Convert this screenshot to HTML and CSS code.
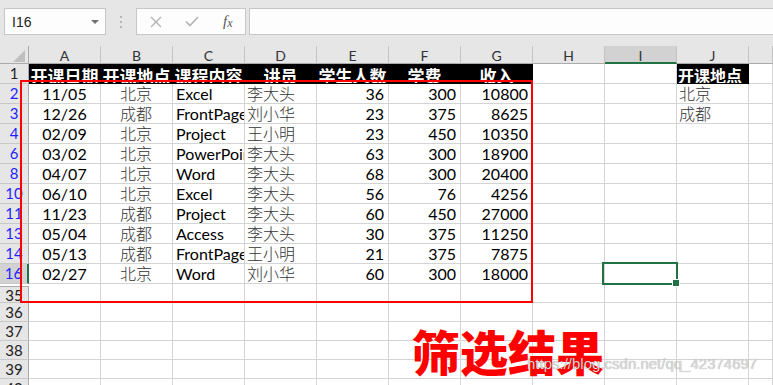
FILE: index.html
```html
<!DOCTYPE html>
<html lang="zh-CN">
<head>
<meta charset="UTF-8">
<meta name="viewport" content="width=device-width, initial-scale=1.0">
<title>筛选结果</title>
<link rel="stylesheet" href="styles.css">
</head>
<body>

<div class="toolbar">
    <div class="namebox"><span>I16</span><span class="caret"></span></div>
    <div class="grip">
        <svg width="4" height="14" viewBox="0 0 4 14"><circle cx="2" cy="2" r="1" fill="#a6a6a6"/><circle cx="2" cy="7" r="1" fill="#a6a6a6"/><circle cx="2" cy="12" r="1" fill="#a6a6a6"/></svg>
    </div>
    <div class="fxbox">
        <svg class="icon-x" width="12" height="12" viewBox="0 0 12 12"><path d="M1 1 L11 11 M11 1 L1 11" stroke="#b4b4b4" stroke-width="1.4" fill="none"/></svg>
        <svg class="icon-ok" width="14" height="11" viewBox="0 0 14 11"><path d="M1 5.5 L5 9.5 L13 1" stroke="#b4b4b4" stroke-width="1.6" fill="none"/></svg>
        <span class="fx">f<span>x</span></span>
    </div>
    <div class="formula"></div>
</div>

<div class="sheet">
    <div class="row colhead">
        <div class="corner"><span class="tri"></span></div>
        <div>A</div><div>B</div><div>C</div><div>D</div><div>E</div><div>F</div><div>G</div><div>H</div><div class="on">I</div><div>J</div><div></div>
    </div>

    <div class="row">
        <div class="rh">1</div>
        <div class="hd">开课日期</div><div class="hd">开课地点</div><div class="hd">课程内容</div><div class="hd">讲员</div><div class="hd">学生人数</div><div class="hd">学费</div><div class="hd">收入</div><div></div><div></div><div class="hd hd-left">开课地点</div><div></div>
    </div>
    <div class="row">
        <div class="rh blue">2</div>
        <div class="ctr">11/05</div><div class="ctr cn">北京</div><div>Excel</div><div class="cn">李大头</div><div class="num">36</div><div class="num">300</div><div class="num">10800</div><div></div><div></div><div class="cn">北京</div><div></div>
    </div>
    <div class="row">
        <div class="rh blue">3</div>
        <div class="ctr">12/26</div><div class="ctr cn">成都</div><div>FrontPage</div><div class="cn">刘小华</div><div class="num">23</div><div class="num">375</div><div class="num">8625</div><div></div><div></div><div class="cn">成都</div><div></div>
    </div>
    <div class="row">
        <div class="rh blue">4</div>
        <div class="ctr">02/09</div><div class="ctr cn">北京</div><div>Project</div><div class="cn">王小明</div><div class="num">23</div><div class="num">450</div><div class="num">10350</div><div></div><div></div><div></div><div></div>
    </div>
    <div class="row">
        <div class="rh blue">6</div>
        <div class="ctr">03/02</div><div class="ctr cn">北京</div><div>PowerPoint</div><div class="cn">李大头</div><div class="num">63</div><div class="num">300</div><div class="num">18900</div><div></div><div></div><div></div><div></div>
    </div>
    <div class="row">
        <div class="rh blue">8</div>
        <div class="ctr">04/07</div><div class="ctr cn">北京</div><div>Word</div><div class="cn">李大头</div><div class="num">68</div><div class="num">300</div><div class="num">20400</div><div></div><div></div><div></div><div></div>
    </div>
    <div class="row">
        <div class="rh blue">10</div>
        <div class="ctr">06/10</div><div class="ctr cn">北京</div><div>Excel</div><div class="cn">李大头</div><div class="num">56</div><div class="num">76</div><div class="num">4256</div><div></div><div></div><div></div><div></div>
    </div>
    <div class="row">
        <div class="rh blue">11</div>
        <div class="ctr">11/23</div><div class="ctr cn">成都</div><div>Project</div><div class="cn">李大头</div><div class="num">60</div><div class="num">450</div><div class="num">27000</div><div></div><div></div><div></div><div></div>
    </div>
    <div class="row">
        <div class="rh blue">13</div>
        <div class="ctr">05/04</div><div class="ctr cn">成都</div><div>Access</div><div class="cn">李大头</div><div class="num">30</div><div class="num">375</div><div class="num">11250</div><div></div><div></div><div></div><div></div>
    </div>
    <div class="row">
        <div class="rh blue">14</div>
        <div class="ctr">05/13</div><div class="ctr cn">成都</div><div>FrontPage</div><div class="cn">王小明</div><div class="num">21</div><div class="num">375</div><div class="num">7875</div><div></div><div></div><div></div><div></div>
    </div>
    <div class="row">
        <div class="rh blue active">16</div>
        <div class="ctr">02/27</div><div class="ctr cn">北京</div><div>Word</div><div class="cn">刘小华</div><div class="num">60</div><div class="num">300</div><div class="num">18000</div><div></div><div></div><div></div><div></div>
    </div>

    <div class="row short">
        <div class="rh hidden-above">35</div>
        <div></div><div></div><div></div><div></div><div></div><div></div><div></div><div></div><div></div><div></div><div></div>
    </div>
    <div class="row short">
        <div class="rh">36</div>
        <div></div><div></div><div></div><div></div><div></div><div></div><div></div><div></div><div></div><div></div><div></div>
    </div>
    <div class="row short">
        <div class="rh">37</div>
        <div></div><div></div><div></div><div></div><div></div><div></div><div></div><div></div><div></div><div></div><div></div>
    </div>
    <div class="row short">
        <div class="rh">38</div>
        <div></div><div></div><div></div><div></div><div></div><div></div><div></div><div></div><div></div><div></div><div></div>
    </div>
    <div class="row short">
        <div class="rh">39</div>
        <div></div><div></div><div></div><div></div><div></div><div></div><div></div><div></div><div></div><div></div><div></div>
    </div>
    <div class="row short">
        <div class="rh">40</div>
        <div></div><div></div><div></div><div></div><div></div><div></div><div></div><div></div><div></div><div></div><div></div>
    </div>

    <!-- overlays drawn on top of the grid -->
    <div class="filter-box"></div>
    <div class="selected"></div>
    <div class="title">筛选结果</div>
    <div class="watermark">https://blog.csdn.net/qq_42374697</div>
</div>

</body>
</html>
```

FILE: styles.css
```css
* {
    box-sizing: border-box;
}
body {
    margin: 0;
    width: 773px;
    height: 385px;
    overflow: hidden;
    background-color: #fff;
    font-family: Lato, "Noto Sans CJK SC", sans-serif;
}

/* formula bar */
.toolbar {
    display: flex;
    align-items: flex-start;
    height: 46px;
    padding-top: 8px;
    background-color: #e6e6e6;
}
.namebox {
    display: flex;
    align-items: center;
    justify-content: space-between;
    width: 102px;
    height: 27px;
    margin-left: 4px;
    padding: 0 6px 0 7px;
    border: 1px solid #c6c6c6;
    background-color: #fdfdfd;
    font-family: "Liberation Sans", sans-serif;
    font-size: 14px;
    color: #222;
}
.caret {
    border-left: 4px solid transparent;
    border-right: 4px solid transparent;
    border-top: 4px solid #707070;
}
.grip {
    display: flex;
    align-items: center;
    justify-content: center;
    width: 30px;
    height: 27px;
}
.fxbox {
    display: flex;
    align-items: center;
    width: 110px;
    height: 27px;
    border: 1px solid #c6c6c6;
    background-color: #fdfdfd;
}
.icon-x {
    margin-left: 13px;
}
.icon-ok {
    margin-left: 23px;
}
.fx {
    margin-left: 24px;
    font-family: "Liberation Serif", serif;
    font-style: italic;
    font-size: 15px;
    color: #555;
}
.fx span {
    font-size: 12px;
    position: relative;
    top: 1px;
}
.formula {
    flex: 1;
    height: 27px;
    margin-left: 3px;
    border: 1px solid #c6c6c6;
    border-right: none;
    background-color: #fdfdfd;
}

/* grid */
.sheet {
    position: relative;
}
.row {
    display: grid;
    grid-template-columns: 29px repeat(10, 72px) 1fr;
    height: 20px;
}
.row.short {
    height: 19px;
}
.row > div {
    border-right: 1px solid #d4d4d4;
    border-bottom: 1px solid #d4d4d4;
    overflow: hidden;
    white-space: nowrap;
    padding: 0 3px;
    font-size: 16px;
    line-height: 19px;
    color: #000;
}
.row > .ctr {
    text-align: center;
}
.row > .num {
    text-align: right;
    padding-right: 4px;
}
.row > .cn {
    font-family: "Noto Sans CJK SC", sans-serif;
    font-weight: 300;
    color: #333;
    padding-left: 2px;
}
.row > .hd {
    background-color: #000;
    border-color: #000;
    color: #fff;
    text-align: center;
    padding: 2px 0 0;
    font-family: "Noto Sans CJK SC", sans-serif;
    font-size: 17px;
    font-weight: bold;
}
.row > .hd-left {
    text-align: left;
    padding-left: 1px;
    font-size: 16px;
}

/* headers */
.colhead {
    height: 18px;
}
.colhead > div {
    background-color: #e6e6e6;
    border-right-color: #c4c4c4;
    border-bottom-color: #ababab;
    text-align: center;
    font-size: 14px;
    line-height: 15px;
    padding-top: 2px;
    color: #333;
}
.colhead > .on {
    background-color: #d2d2d2;
    border-bottom: 2px solid #217346;
}
.colhead > .corner {
    position: relative;
    border-right-color: #ababab;
}
.tri {
    position: absolute;
    right: 3px;
    bottom: 1px;
    border-left: 12px solid transparent;
    border-bottom: 12px solid #bfbfbf;
}
.row > .rh {
    background-color: #e6e6e6;
    border-right-color: #ababab;
    border-bottom-color: #c8c8c8;
    padding: 0;
    text-align center;
    text-align: center;
    font-size: 15px;
    color: #222;
}
.row > .blue {
    color: #1f1fff;
}
.row > .active {
    background-color: #d2d2d2;
    border-right: 2px solid #217346;
}
.row > .hidden-above {
    margin-top: 2px;
    border-top: 1px solid #ababab;
    line-height: 17px;
}

/* overlays */
.filter-box {
    position: absolute;
    left: 20px;
    top: 34px;
    width: 513px;
    height: 223px;
    border: 2px solid #ff0000;
}
.selected {
    position: absolute;
    left: 602px;
    top: 216px;
    width: 76px;
    height: 23px;
    border: 2px solid #217346;
}
.selected::after {
    content: "";
    position: absolute;
    right: -4px;
    bottom: -4px;
    width: 6px;
    height: 6px;
    background-color: #217346;
    border: 1px solid #fff;
}
.title {
    position: absolute;
    left: 412px;
    top: 280px;
    font-family: "Noto Sans CJK SC", sans-serif;
    font-size: 48px;
    line-height: 48px;
    font-weight: 900;
    color: #ff0000;
}
.watermark {
    position: absolute;
    left: 527px;
    top: 309px;
    font-family: "Liberation Sans", sans-serif;
    font-size: 15px;
    color: #d9d9d9;
    text-shadow: 0 0 1px rgba(0, 0, 0, 0.35);
}
```
